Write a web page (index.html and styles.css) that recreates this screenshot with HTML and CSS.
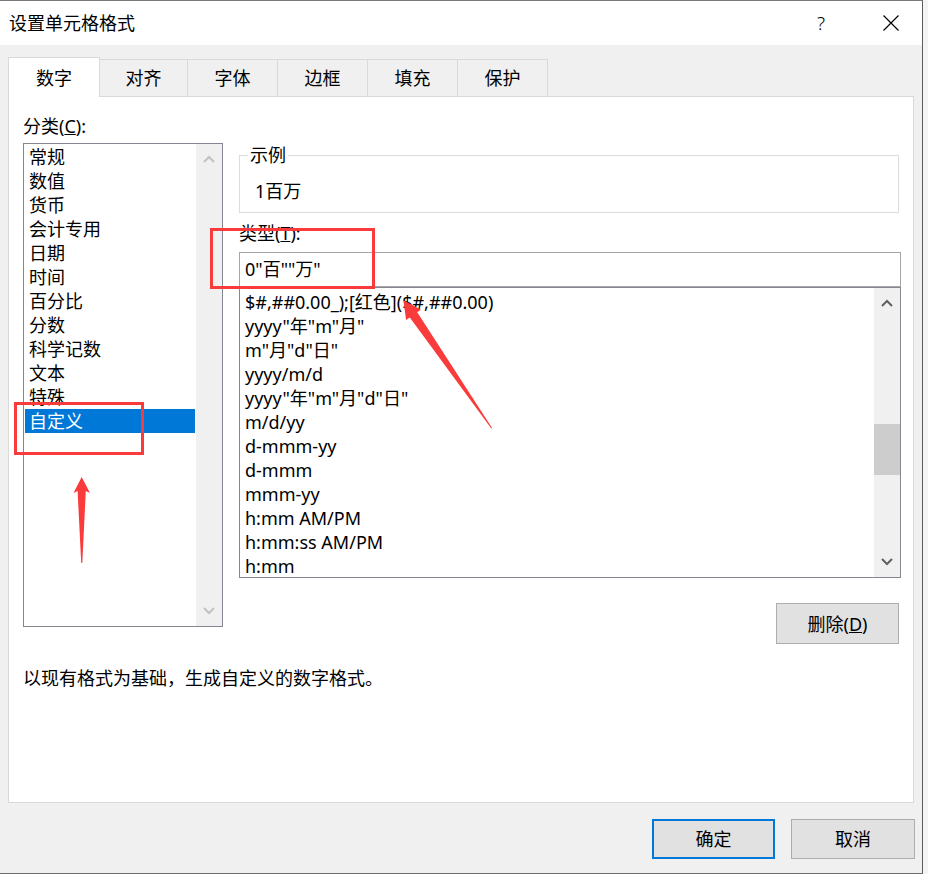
FILE: index.html
```html
<!DOCTYPE html>
<html lang="zh-CN">
<head>
<meta charset="utf-8">
<title>设置单元格格式</title>
<link rel="stylesheet" href="styles.css">
</head>
<body>
<div class="dialog">
  <div class="titlebar">
    <span class="title">设置单元格格式</span>
    <span class="help">?</span>
    <span class="close"><svg width="16" height="16" viewBox="0 0 16 16"><path d="M0.5 0.5 L15.5 15.5 M15.5 0.5 L0.5 15.5" stroke="#000" stroke-width="1.2" fill="none"/></svg></span>
  </div>
  <div class="body">
    <div class="tabs">
      <div class="tab sel">数字</div>
      <div class="tab">对齐</div>
      <div class="tab">字体</div>
      <div class="tab">边框</div>
      <div class="tab">填充</div>
      <div class="tab">保护</div>
    </div>
    <div class="panel">
      <div class="cols">
        <div class="left">
          <div class="label">分类(<u>C</u>):</div>
          <div class="listbox cat">
            <div class="items">
              <div class="item">常规</div>
              <div class="item">数值</div>
              <div class="item">货币</div>
              <div class="item">会计专用</div>
              <div class="item">日期</div>
              <div class="item">时间</div>
              <div class="item">百分比</div>
              <div class="item">分数</div>
              <div class="item">科学记数</div>
              <div class="item">文本</div>
              <div class="item">特殊</div>
              <div class="item sel">自定义</div>
            </div>
            <div class="scrollbar disabled">
              <div class="sb-btn"><svg width="12" height="8" viewBox="0 0 12 8"><polyline points="1,7 6,2 11,7" fill="none" stroke-width="2"/></svg></div>
              <div class="sb-track"></div>
              <div class="sb-btn"><svg width="12" height="8" viewBox="0 0 12 8"><polyline points="1,1 6,6 11,1" fill="none" stroke-width="2"/></svg></div>
            </div>
          </div>
        </div>
        <div class="right">
          <div class="group">
            <div class="group-label">示例</div>
            <div class="group-value">1百万</div>
          </div>
          <div class="label type-label">类型(<u>T</u>):</div>
          <div class="input">0"百""万"</div>
          <div class="listbox fmt">
            <div class="items">
              <div class="item">$#,##0.00_);[红色]($#,##0.00)</div>
              <div class="item">yyyy"年"m"月"</div>
              <div class="item">m"月"d"日"</div>
              <div class="item">yyyy/m/d</div>
              <div class="item">yyyy"年"m"月"d"日"</div>
              <div class="item">m/d/yy</div>
              <div class="item">d-mmm-yy</div>
              <div class="item">d-mmm</div>
              <div class="item">mmm-yy</div>
              <div class="item">h:mm AM/PM</div>
              <div class="item">h:mm:ss AM/PM</div>
              <div class="item">h:mm</div>
            </div>
            <div class="scrollbar">
              <div class="sb-btn"><svg width="12" height="8" viewBox="0 0 12 8"><polyline points="1,7 6,2 11,7" fill="none" stroke-width="2"/></svg></div>
              <div class="sb-track"><div class="sb-thumb"></div></div>
              <div class="sb-btn"><svg width="12" height="8" viewBox="0 0 12 8"><polyline points="1,1 6,6 11,1" fill="none" stroke-width="2"/></svg></div>
            </div>
          </div>
          <div class="btn del">删除(<u>D</u>)</div>
        </div>
      </div>
      <div class="desc">以现有格式为基础，生成自定义的数字格式。</div>
    </div>
    <div class="footer">
      <div class="btn ok">确定</div>
      <div class="btn">取消</div>
    </div>
  </div>
</div>
<svg class="annot" width="928" height="874" viewBox="0 0 928 874">
  <rect x="15.5" y="403.5" width="127" height="50" fill="none" stroke="#fa3b3b" stroke-width="3"/>
  <rect x="211.5" y="229.5" width="162" height="58" fill="none" stroke="#fa3b3b" stroke-width="3"/>
  <polygon points="81.7,477 90,493 85.8,491 82.3,563 81.2,563 77.6,491 73.5,493" fill="#fa3b3b"/>
  <polygon points="403.3,300 420.9,309.7 417.2,312.3 492.1,428 491.3,428.6 409.8,317.4 406.1,319.9" fill="#fa3b3b"/>
</svg>
</body>
</html>
```

FILE: styles.css
```css
* { box-sizing: border-box; }
html, body { margin: 0; padding: 0; }
body {
  width: 928px;
  height: 874px;
  position: relative;
  overflow: hidden;
  background: #f4f4f4;
  font-family: "Noto Sans", "Noto Sans CJK SC", sans-serif;
  font-size: 18px;
  color: #000;
}
.dialog {
  width: 923px;
  height: 874px;
  border-top: 1px solid #7a7a7a;
  border-bottom: 1px solid #6e6e6e;
  border-right: 1px solid #5c5c5c;
  display: flex;
  flex-direction: column;
  background: #f0f0f0;
}
.titlebar {
  height: 44px;
  background: #fff;
  display: flex;
  align-items: center;
  flex: none;
}
.title {
  padding-left: 9px;
  line-height: 24px;
}
.help {
  margin-left: auto;
  margin-right: 24px;
  width: 46px;
  text-align: center;
  font-size: 19px;
  font-weight: 300;
  line-height: 24px;
}
.close {
  width: 46px;
  margin-right: 8px;
  display: flex;
  justify-content: center;
  align-items: center;
}
.body {
  flex: 1;
  display: flex;
  flex-direction: column;
  background: #f0f0f0;
}
.tabs {
  display: flex;
  align-items: flex-end;
  height: 52px;
  padding-left: 8px;
  margin-bottom: -1px;
  position: relative;
  z-index: 1;
}
.tab {
  width: 91px;
  height: 37px;
  margin-left: -1px;
  margin-bottom: 1px;
  border: 1px solid #d9d9d9;
  border-bottom: none;
  background: #f0f0f0;
  display: flex;
  justify-content: center;
  align-items: center;
  line-height: 24px;
}
.tab.sel {
  width: 92px;
  height: 40px;
  margin-left: 0;
  margin-bottom: 0;
  background: #fff;
  position: relative;
  z-index: 2;
}
.tab.sel + .tab { width: 89px; }
.panel {
  height: 707px;
  margin: 0 8px 0 8px;
  border: 1px solid #d9d9d9;
  background: #fff;
  padding: 17px 14px 0 14px;
}
.cols {
  display: flex;
  align-items: flex-start;
}
.left { width: 200px; flex: none; }
.right {
  width: 662px;
  margin-left: 16px;
  flex: none;
  display: flex;
  flex-direction: column;
}
.label { line-height: 24px; }
.left .label { margin-bottom: 5px; }
.listbox {
  border: 1px solid #828790;
  display: flex;
  background: #fff;
}
.listbox.cat { height: 484px; }
.listbox.fmt { height: 291px; }
.items {
  flex: 1;
  padding: 1px 1px 0 1px;
  white-space: nowrap;
}
.fmt .items { padding: 2px 1px 0 5px; }
.item {
  line-height: 24px;
  height: 24px;
  padding-left: 4px;
}
.fmt .item { padding-left: 0; }
.fmt .item:last-child { height: 23px; }
.item.sel {
  background: #0078d7;
  color: #fff;
}
.scrollbar {
  width: 26px;
  flex: none;
  background: #f0f0f0;
  display: flex;
  flex-direction: column;
}
.sb-btn {
  height: 30px;
  display: flex;
  justify-content: center;
  align-items: center;
  flex: none;
}
.sb-btn svg { stroke: #606060; }
.scrollbar.disabled .sb-btn svg { stroke: #c2c2c2; }
.sb-track { flex: 1; }
.sb-thumb {
  margin-top: 106px;
  height: 51px;
  background: #cdcdcd;
}
.group {
  margin-top: 41px;
  width: 660px;
  border: 1px solid #dcdcdc;
  padding-bottom: 9px;
}
.group-label {
  width: max-content;
  margin: -11px 0 0 8px;
  padding: 0 2px;
  background: #fff;
  line-height: 20px;
}
.group-value {
  margin-top: 14px;
  padding-left: 15px;
  line-height: 24px;
}
.type-label { margin-top: 8px; }
.input {
  margin-top: 7px;
  height: 35px;
  border: 1px solid #a6a6a6;
  padding-left: 5px;
  line-height: 32px;
}
.btn {
  background: #e1e1e1;
  border: 1px solid #adadad;
  display: flex;
  justify-content: center;
  align-items: center;
  line-height: 24px;
}
.btn.del {
  align-self: flex-end;
  margin: 25px 2px 0 0;
  width: 123px;
  height: 41px;
}
.desc {
  margin-top: 22px;
  line-height: 24px;
}
.footer {
  display: flex;
  justify-content: flex-end;
  gap: 16px;
  padding: 16px 7px 0 0;
}
.footer .btn {
  width: 124px;
  height: 40px;
}
.footer .btn.ok {
  width: 123px;
  border: 2px solid #0078d7;
}
.annot {
  position: absolute;
  left: 0;
  top: 0;
  pointer-events: none;
}
```
